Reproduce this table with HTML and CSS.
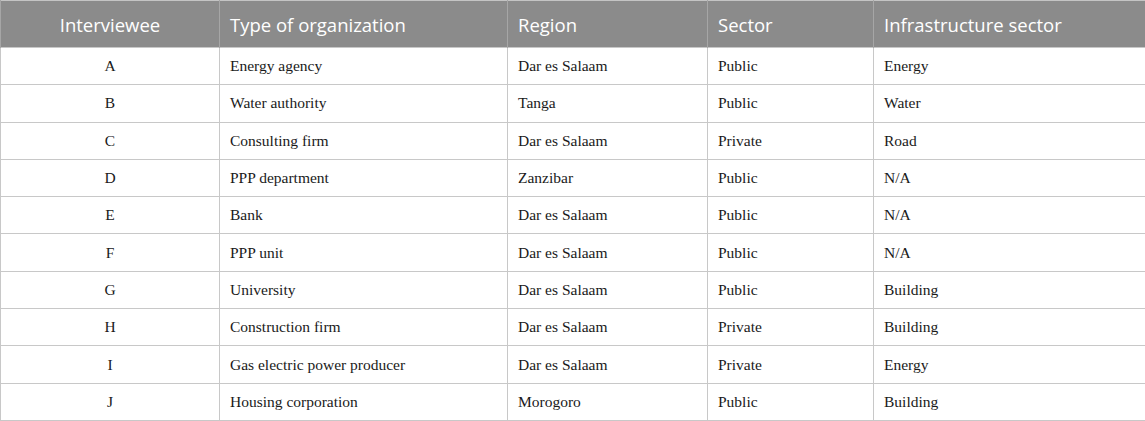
FILE: index.html
```html
<!DOCTYPE html>
<html>
<head>
<meta charset="utf-8">
<link rel="stylesheet" href="styles.css">
</head>
<body>
<table class="data">
  <colgroup>
    <col class="c1"><col class="c2"><col class="c3"><col class="c4"><col class="c5">
  </colgroup>
  <thead>
    <tr>
      <th class="center">Interviewee</th>
      <th>Type of organization</th>
      <th>Region</th>
      <th>Sector</th>
      <th>Infrastructure sector</th>
    </tr>
  </thead>
  <tbody>
    <tr><td class="center">A</td><td>Energy agency</td><td>Dar es Salaam</td><td>Public</td><td>Energy</td></tr>
    <tr><td class="center">B</td><td>Water authority</td><td>Tanga</td><td>Public</td><td>Water</td></tr>
    <tr><td class="center">C</td><td>Consulting firm</td><td>Dar es Salaam</td><td>Private</td><td>Road</td></tr>
    <tr><td class="center">D</td><td>PPP department</td><td>Zanzibar</td><td>Public</td><td>N/A</td></tr>
    <tr><td class="center">E</td><td>Bank</td><td>Dar es Salaam</td><td>Public</td><td>N/A</td></tr>
    <tr><td class="center">F</td><td>PPP unit</td><td>Dar es Salaam</td><td>Public</td><td>N/A</td></tr>
    <tr><td class="center">G</td><td>University</td><td>Dar es Salaam</td><td>Public</td><td>Building</td></tr>
    <tr><td class="center">H</td><td>Construction firm</td><td>Dar es Salaam</td><td>Private</td><td>Building</td></tr>
    <tr><td class="center">I</td><td>Gas electric power producer</td><td>Dar es Salaam</td><td>Private</td><td>Energy</td></tr>
    <tr><td class="center">J</td><td>Housing corporation</td><td>Morogoro</td><td>Public</td><td>Building</td></tr>
  </tbody>
</table>
</body>
</html>
```
FILE: styles.css
```css
html, body {
  margin: 0;
  padding: 0;
  background: #ffffff;
}

.data {
  width: 1145px;
  border-collapse: collapse;
  table-layout: fixed;
  border: 1px solid #c4c4c4;
}

.c1 { width: 219px; }
.c2 { width: 288px; }
.c3 { width: 200px; }
.c4 { width: 166px; }
.c5 { width: 272px; }

.data th {
  background: #8b8b8b;
  color: #ffffff;
  font-family: "Open Sans", "Noto Sans", sans-serif;
  font-weight: 400;
  font-size: 18.5px;
  text-align: left;
  height: 47px;
  padding: 0 10px;
  border-left: 1px solid #a6a6a6;
  box-sizing: border-box;
}

.data td {
  font-family: "Liberation Serif", "Times New Roman", serif;
  font-size: 15.5px;
  color: #1a1a1a;
  height: 37.3px;
  padding: 0 10px;
  border: 1px solid #c8c8c8;
  box-sizing: border-box;
}

.data .center {
  text-align: center;
}
```
